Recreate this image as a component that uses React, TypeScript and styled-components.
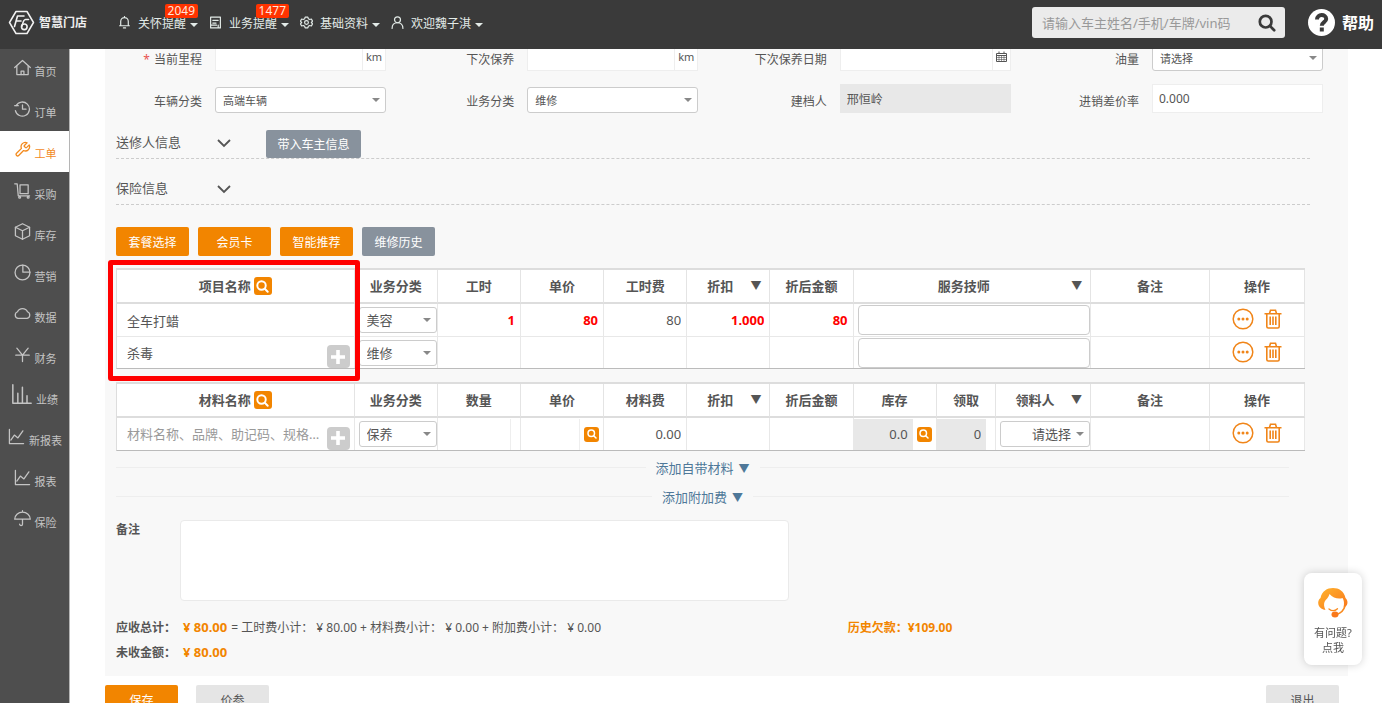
import React from "react";
import styled, { createGlobalStyle, css } from "styled-components";

const ORANGE = "#f28500";
const FONT = '"Noto Sans", "Noto Sans CJK SC", sans-serif';

const GlobalStyle = createGlobalStyle`
  *, *::before, *::after { box-sizing: border-box; }
  body { margin: 0; background: #fff; color: #555; font: 12px/18px ${FONT}; }
  button, input, select, textarea { font-family: inherit; color: inherit; margin: 0; }
  button { cursor: pointer; padding: 0; border: 0; background: none; }
  svg { display: block; flex: none; }
`;

/* ---------- shell ---------- */

const Shell = styled.div`
  height: 100vh;
  display: flex;
  flex-direction: column;
  overflow: hidden;
`;

const Header = styled.header`
  flex: none;
  height: 49px;
  display: flex;
  align-items: center;
  padding: 0 8px 4px;
  background: #3a3a3a;
  color: #e3ebe8;
`;

const Brand = styled.a`
  display: flex;
  align-items: center;
  gap: 4px;
  width: 110px;
  color: #eee;
  font-size: 12px;
  font-weight: 700;
  text-decoration: none;
`;

const Nav = styled.nav`
  display: flex;
  gap: 11px;
  flex: 1;
`;

const NavButton = styled.button`
  position: relative;
  display: flex;
  align-items: center;
  height: 28px;
  font-size: 12px;
  white-space: nowrap;
`;

const NavText = styled.span`
  margin: 0 4px 0 7px;
`;

const Caret = styled.i<{ $light?: boolean }>`
  flex: none;
  width: 0;
  height: 0;
  border: solid transparent;
  border-width: 4px 4px 0;
  border-top-color: ${(p) => (p.$light ? "#e3ebe8" : "#888")};
  margin-top: 4px;
`;

const Badge = styled.span`
  position: absolute;
  top: -5px;
  right: 0;
  height: 14px;
  padding: 0 3px;
  border-radius: 2px;
  background: #ff3300;
  color: #ffe6dd;
  font-size: 12px;
  line-height: 14px;
`;

const SearchBox = styled.form`
  display: flex;
  align-items: center;
  width: 253px;
  height: 31px;
  margin-right: 23px;
  padding: 0 9px 0 10px;
  border-radius: 3px;
  background: #ebebeb;
`;

const SearchInput = styled.input`
  flex: 1;
  min-width: 0;
  padding: 0;
  border: 0;
  outline: 0;
  background: none;
  font-size: 13px;
  &::placeholder { color: #999; }
`;

const Help = styled.a`
  display: flex;
  align-items: center;
  gap: 7px;
  color: #fff;
  font-size: 16px;
  font-weight: 700;
  text-decoration: none;
`;

const Body = styled.div`
  flex: 1;
  min-height: 0;
  display: flex;
`;

const Sidebar = styled.nav`
  flex: none;
  width: 70px;
  border-right: 1px solid #b5b5b5;
  background: #4e4e4e;
`;

const SideLink = styled.a<{ $active?: boolean }>`
  display: flex;
  justify-content: center;
  align-items: flex-end;
  gap: 4px;
  height: 41px;
  padding: 0 0 12px 1px;
  color: ${(p) => (p.$active ? "#f28a1e" : "#c4c4c4")};
  background: ${(p) => (p.$active ? "#fff" : "transparent")};
  font-size: 11px;
  line-height: 12px;
  text-decoration: none;
  white-space: nowrap;
  svg { margin-bottom: 2px; }
`;

const Main = styled.main`
  flex: 1;
  min-width: 0;
  overflow: hidden;
  padding: 0 34px 0 35px;
`;

/* The work order is scrolled: its first row starts under the header. */
const Panel = styled.section`
  margin-top: -7px;
  padding: 0 0 11px 11px;
  background: #f8f8f8;
`;

/* ---------- vehicle form ---------- */

const FormRow = styled.div`
  display: flex;
  justify-content: space-between;
  margin: 0 25px 13px 0;
`;

const Field = styled.div`
  display: flex;
  align-items: flex-end;
  width: 270px;
  height: 29px;
`;

const FieldLabel = styled.label`
  flex: 1;
  padding-right: 13px;
  line-height: 22px;
  text-align: right;
  white-space: nowrap;
`;

const Required = styled.span`
  margin-right: 4px;
  color: #e8534f;
`;

const Control = styled.div`
  display: flex;
  width: 171px;
  height: 29px;
  align-items: flex-end;
`;

const TextInput = styled.input`
  flex: 1;
  min-width: 0;
  height: 29px;
  padding: 0 6px;
  border: 1px solid #eee;
  background: #fff;
  font-size: 12px;
  &:disabled { background: #e8e8e8; border-color: #e8e8e8; color: #555; }
`;

const Addon = styled.span`
  display: flex;
  align-items: center;
  justify-content: center;
  min-width: 23px;
  height: 29px;
  border: 1px solid #eee;
  border-left: 0;
  background: #fff;
  font-size: 11px;
`;

const CalendarAddon = styled(Addon)`
  min-width: 18px;
`;

const SelectBox = styled.div<{ $table?: boolean }>`
  position: relative;
  flex: 1;
  height: 26px;
  ${(p) => p.$table && css`margin-left: 4px;`}
  ${Caret} {
    position: absolute;
    right: 6px;
    top: 11px;
    margin: 0;
    pointer-events: none;
  }
`;

const Select = styled.select<{ $size: number; $right?: boolean }>`
  appearance: none;
  display: block;
  width: 100%;
  height: 100%;
  padding: 0 18px 0 7px;
  border: 1px solid #ccc;
  border-radius: 3px;
  background: #fff;
  font-size: ${(p) => p.$size}px;
  text-align-last: ${(p) => (p.$right ? "right" : "left")};
`;

/* ---------- collapsible sections ---------- */

const Section = styled.div<{ $first?: boolean }>`
  display: flex;
  align-items: flex-end;
  height: ${(p) => (p.$first ? 33 : 46)}px;
  margin-right: 38px;
  border-bottom: 1px dashed #ccc;
`;

const SectionTitle = styled.h2`
  width: 101px;
  margin: 0 0 7px;
  font-size: 13px;
  font-weight: 400;
  line-height: 18px;
`;

const Toggle = styled.button`
  width: 14px;
  height: 18px;
  margin: 0 35px 6px 0;
`;

const Button = styled.button<{ $tone?: "orange" | "slate" | "plain"; $wide?: boolean }>`
  width: ${(p) => (p.$wide ? 95 : 73)}px;
  height: ${(p) => (p.$wide ? 28 : 29)}px;
  border-radius: 2px;
  color: ${(p) => (p.$tone === "plain" ? "#555" : "#fff")};
  background: ${(p) =>
    p.$tone === "slate" ? "#88929d" : p.$tone === "plain" ? "#e5e5e5" : ORANGE};
  font-size: 12px;
`;

const Toolbar = styled.div`
  display: flex;
  gap: 9px;
  margin: 22px 0 12px;
`;

const Content = styled.div`
  margin-right: 43px;
`;

/* ---------- tables ---------- */

const TableWrap = styled.div`
  position: relative;
  margin-bottom: 13px;
`;

const Table = styled.table`
  width: 100%;
  table-layout: fixed;
  border-collapse: separate;
  border-spacing: 0;
  border-top: 2px solid #ddd;
  border-bottom: 1px solid #bbb;
  border-left: 1px solid #ddd;
  background: #fff;
  font-size: 13px;
`;

const Th = styled.th`
  height: 34px;
  padding: 0;
  border-right: 1px solid #e4e4e4;
  border-bottom: 2px solid #ddd;
  font-weight: 700;
  white-space: nowrap;
`;

const ThInner = styled.div<{ $arrow?: boolean }>`
  display: flex;
  align-items: center;
  justify-content: center;
  gap: 3px;
  ${(p) => p.$arrow && css`padding: 0 8px 0 6px;`}
`;

const ThText = styled.span<{ $grow?: boolean }>`
  flex: ${(p) => (p.$grow ? 1 : "none")};
`;

const ThArrow = styled.span`
  font-size: 11px;
`;

const Td = styled.td`
  height: 32px;
  padding: 0;
  border-right: 1px solid #e8e8e8;
  tr + tr > & { border-top: 1px solid #e8e8e8; }
`;

const CellFlex = styled.div`
  display: flex;
  align-items: center;
  height: 31px;
`;

const CellInput = styled.input<{ $tone?: "red"; $right?: boolean; $off?: boolean; $edge?: boolean; $name?: boolean }>`
  flex: 1;
  min-width: 0;
  width: 100%;
  height: 31px;
  padding: ${(p) => (p.$name ? "0 0 0 10px" : "0 5px")};
  border: 0;
  border-right: ${(p) => (p.$edge ? "1px solid #eee" : "0")};
  outline: 0;
  background: ${(p) => (p.$off ? "#e8e8e8" : "transparent")};
  color: ${(p) => (p.$tone === "red" ? "#ff0000" : "#555")};
  font-size: 13px;
  font-weight: ${(p) => (p.$tone === "red" ? 700 : 400)};
  text-align: ${(p) => (p.$right ? "right" : "left")};
  text-overflow: ellipsis;
  &::placeholder { color: #999; }
`;

const Technician = styled.input`
  flex: 1;
  min-width: 0;
  height: 30px;
  margin-left: 4px;
  border: 1px solid #ccc;
  border-radius: 4px;
  background: #fff;
`;

const Spacer = styled.span`
  flex: none;
  width: 9px;
`;

const IconButton = styled.button<{ $size: number }>`
  flex: none;
  display: flex;
  align-items: center;
  justify-content: center;
  width: ${(p) => p.$size}px;
  height: ${(p) => p.$size}px;
  border-radius: 3px;
  background: ${ORANGE};
`;

const SmallSearch = styled(IconButton)`
  margin: 0 4px;
`;

const AddButton = styled(IconButton)`
  align-self: flex-end;
  margin: 0 4px;
  border-radius: 4px;
  background: #ccc;
`;

const Actions = styled.div`
  display: flex;
  align-items: center;
  justify-content: center;
  gap: 10px;
  height: 31px;
  padding-bottom: 2px;
`;

/* Highlight frame over the item-name column */
const Highlight = styled.div`
  position: absolute;
  top: -8px;
  bottom: -12px;
  left: -8px;
  width: calc(20% + 14px);
  border: 5px solid #ff0000;
  border-radius: 3px;
  pointer-events: none;
`;

const AddRows = styled.div`
  margin: 2px 16px 9px 0;
`;

const AddRow = styled.div`
  display: flex;
  align-items: center;
  gap: 10px;
  height: 29px;
  &::before, &::after { content: ""; flex: 1; border-top: 1px solid #eee; }
`;

const AddLink = styled.button`
  display: flex;
  align-items: center;
  gap: 5px;
  color: #4f7899;
  font-size: 13px;
`;

/* ---------- remarks and totals ---------- */

const Remark = styled.div`
  display: flex;
  label { width: 64px; font-weight: 700; line-height: 20px; }
`;

const RemarkArea = styled.textarea`
  width: 609px;
  height: 81px;
  border: 1px solid #eaeaea;
  border-radius: 4px;
  background: #fff;
  resize: none;
`;

const Totals = styled.div`
  display: grid;
  grid-template-columns: 8fr 5fr;
  margin-top: 14px;
  line-height: 25px;
  white-space: nowrap;
`;

const Strong = styled.b`
  display: inline-block;
  width: 67px;
`;

const Money = styled.b<{ $size?: number }>`
  color: ${ORANGE};
  font-size: ${(p) => p.$size ?? 12}px;
`;

const Breakdown = styled.span`
  margin-left: 4px;
`;

const Footer = styled.footer`
  display: flex;
  gap: 18px;
  margin: 9px 9px 0 0;
  button:last-child { margin-left: auto; }
`;

const Support = styled.button`
  position: fixed;
  right: 20px;
  bottom: 38px;
  display: flex;
  flex-direction: column;
  align-items: center;
  width: 58px;
  height: 92px;
  padding-top: 14px;
  border-radius: 8px;
  background: #fff;
  box-shadow: 0 0 8px rgba(0, 0, 0, 0.18);
  font-size: 11px;
  line-height: 15px;
`;

const SupportText = styled.span`
  margin-top: 7px;
`;

/* ---------- icons ---------- */

function Line({ size = 17, w = 1.8, children }: { size?: number; w?: number; children: React.ReactNode }) {
  return (
    <svg width={size} height={size} viewBox="0 0 24 24" fill="none" stroke="currentColor" strokeWidth={w} strokeLinecap="round" strokeLinejoin="round" aria-hidden="true">
      {children}
    </svg>
  );
}

const sideIcons: Record<string, React.ReactNode> = {
  home: <><path d="M1 12 12 2l11 10" /><path d="M4 10v12h16V10" /><path d="M10 22v-5h4v5" /></>,
  history: <><path d="M3 8a10 10 0 1 1-1 7" /><path d="M1 8h5" /><path d="M12 7v6h5" /></>,
  wrench: <path d="M14.700 6.300a1 1 0 0 0 0 1.400l1.600 1.600a1 1 0 0 0 1.400 0l3.770-3.770a6 6 0 0 1-7.940 7.940l-6.910 6.910a2.120 2.120 0 0 1-3-3l6.910-6.910a6 6 0 0 1 7.940-7.940l-3.760 3.760z" />,
  cart: <><path d="M1 2.500h3.500l1.500 17h16" /><path d="M8.500 4H20v12.500H8.500z" /><circle cx="8" cy="21.500" r="1.300" /><circle cx="20" cy="21.500" r="1.300" /></>,
  box: <><path d="M12 1 22 6v12l-10 5L2 18V6z" /><path d="m2 6 10 5 10-5M12 11v12" /></>,
  pie: <><circle cx="12" cy="12" r="10.500" /><path d="M12.500 1.500V11.500H22.500" /></>,
  cloud: <path d="M5.500 19a5 5 0 0 1-.5-9.500A7.500 7 0 0 1 19 9.500 5 5 0 0 1 18.500 19z" />,
  yen: <path d="m4 3 8 10 8-10M12 13v9M2.500 13h19" />,
  bars: <path d="M1 1v22h22M7 23V11M12.500 23V4M18 23v-9" />,
  line: <path d="M2 2v20h20M4 17l5-7 5 4 7-10" />,
  umbrella: <path d="M12 1v2M1 13A11 10 0 0 1 23 13zM12 13v7a2 2 0 0 1-4 0" />,
};

const BellIcon = () => (
  <Line size={13} w={2.2}><path d="M5 18V10a7 7 0 0 1 14 0v8zM3 18h18M12 1v2M10 22h4" /></Line>
);
const DocIcon = () => (
  <Line size={13} w={2.2}><path d="M3 2h18v20H3zM7 8h10M7 13h6M3 17h11M17 17v5" /></Line>
);
const GearIcon = () => (
  <Line size={13} w={2.2}><path d="m9.500 2-.8 3-2.700 1.500L3 5.600.8 9.500 3 12l-2.200 2.500L3 18.400l3-.9L8.700 19l.8 3h5l.8-3 2.700-1.500 3 .9 2.200-3.900L21 12l2.200-2.500L21 5.600l-3 .9L15.300 5l-.8-3z" /><circle cx="12" cy="12" r="3.500" /></Line>
);
const UserIcon = () => (
  <Line size={13} w={2.2}><circle cx="12" cy="7" r="5.500" /><path d="M2 23c0-7 4-10.500 10-10.500S22 16 22 23" /></Line>
);

const SearchGlyph = ({ size, color = "#fff", w = 3 }: { size: number; color?: string; w?: number }) => (
  <svg width={size} height={size} viewBox="0 0 20 20" fill="none" stroke={color} strokeWidth={w} strokeLinecap="round" aria-hidden="true">
    <circle cx="8.500" cy="8.500" r="6.500" /><path d="m13.500 13.500 4.500 4.500" />
  </svg>
);

const LogoIcon = () => (
  <svg width="27" height="25" viewBox="0 0 27 25" fill="none" aria-hidden="true">
    <path d="M8 1.500h11l6.500 11-6.500 11H8l-6.500-11z" stroke="#f2f2f2" strokeWidth="1.500" strokeLinejoin="round" />
    <g stroke="#f2f2f2" strokeWidth="1.600" strokeLinecap="round" strokeLinejoin="round">
      <path d="M6.500 16.500 9.500 6h6.500M8 11h5" />
      <path d="M20.500 9.500h-3c-2 0-2.500 2.500-3.500 6.500" />
      <ellipse cx="16.300" cy="16.800" rx="2.800" ry="2.800" />
    </g>
  </svg>
);

const HelpIcon = () => (
  <svg width="27" height="27" viewBox="0 0 27 27" aria-hidden="true">
    <circle cx="13.500" cy="13.500" r="13.500" fill="#fff" />
    <path d="M9 10.500c0-6 9.200-5.700 9.200-.6 0 3.200-4.400 3.200-4.400 6.800" fill="none" stroke="#3a3a3a" strokeWidth="4" />
    <rect x="11.800" y="18.500" width="4" height="4" fill="#3a3a3a" />
  </svg>
);

const CalendarIcon = () => (
  <svg width="11" height="11" viewBox="0 0 11 11" fill="none" stroke="#555" aria-hidden="true">
    <path d="M.5 2.500h10v8H.5zM.5 4.500h10M3 .5v2M8 .5v2" />
    <path d="M.5 6.500h10M.5 8.500h10M3 4.500v6M5.500 4.500v6M8 4.500v6" strokeWidth=".6" />
  </svg>
);

const ChevronIcon = () => (
  <svg width="14" height="18" viewBox="0 0 14 18" fill="none" stroke="#555" strokeWidth="1.800" aria-hidden="true">
    <path d="m1 6 6 6 6-6" />
  </svg>
);

const PlusIcon = () => (
  <svg width="14" height="14" viewBox="0 0 14 14" fill="#fff" aria-hidden="true">
    <path d="M5.200 0h3.600v5.200H14v3.600H8.800V14H5.200V8.800H0V5.200h5.200z" />
  </svg>
);

const MoreIcon = () => (
  <svg width="22" height="22" viewBox="0 0 22 22" fill="#f08519" aria-hidden="true">
    <circle cx="11" cy="11" r="9.800" fill="none" stroke="#f08519" strokeWidth="1.500" />
    <circle cx="6.800" cy="11" r="1.500" /><circle cx="11" cy="11" r="1.500" /><circle cx="15.200" cy="11" r="1.500" />
  </svg>
);

const TrashIcon = () => (
  <svg width="18" height="20" viewBox="0 0 18 20" fill="none" stroke="#f08519" strokeWidth="1.600" aria-hidden="true">
    <path d="M.5 4.800h17M5.500 4.500l1-3.200h5l1 3.200M2.800 5v12.500q0 1.500 1.500 1.500h9.400q1.500 0 1.500-1.500V5M6.200 7.500v8.500M9 7.500v8.500M11.800 7.500v8.500" />
  </svg>
);

const AgentIcon = () => (
  <svg width="32" height="31" viewBox="0 0 32 31" fill="none" aria-hidden="true">
    <defs>
      <linearGradient id="agent" x1="0" y1="0" x2="1" y2="1">
        <stop offset="0" stopColor="#ffb52e" /><stop offset="1" stopColor="#f9741a" />
      </linearGradient>
    </defs>
    <path d="M3.500 11C5 4 10 1 16 1s11 3 12.500 10c2.500 2 3 7-.5 9l-1.500.5c1-4 .5-7.500-1-9.500-4 1.500-9.500 0-13-4-1 4-3.500 5-5 8-.8 2-.5 5 1 8-3-.5-6-2-7-5-.8-3 0-5.500 2-7z" fill="url(#agent)" />
    <path d="M12 22c2.500 2 6 2 8.500-.3" stroke="#f98a1e" strokeWidth="1.300" strokeLinecap="round" />
    <path d="M28 19c-1 4-4 7-8.500 8.500" stroke="#f98a1e" strokeWidth="1.500" />
    <ellipse cx="18" cy="27.500" rx="3.500" ry="3" fill="#f9781a" />
  </svg>
);

/* ---------- data ---------- */

const navItems = [
  { text: "关怀提醒", icon: <BellIcon />, badge: "2049" },
  { text: "业务提醒", icon: <DocIcon />, badge: "1477" },
  { text: "基础资料", icon: <GearIcon /> },
  { text: "欢迎魏子淇", icon: <UserIcon /> },
];

const sideItems = [
  ["首页", "home"], ["订单", "history"], ["工单", "wrench"], ["采购", "cart"], ["库存", "box"], ["营销", "pie"],
  ["数据", "cloud"], ["财务", "yen"], ["业绩", "bars"], ["新报表", "line"], ["报表", "line"], ["保险", "umbrella"],
];

type HeadCell = { text: string; width: number; arrow?: boolean; search?: boolean };

const laborHead: HeadCell[] = [
  { text: "项目名称", width: 20, search: true }, { text: "业务分类", width: 7 }, { text: "工时", width: 7 },
  { text: "单价", width: 7 }, { text: "工时费", width: 7 }, { text: "折扣", width: 7, arrow: true },
  { text: "折后金额", width: 7 }, { text: "服务技师", width: 20, arrow: true }, { text: "备注", width: 10 }, { text: "操作", width: 8 },
];

const materialHead: HeadCell[] = [
  { text: "材料名称", width: 20, search: true }, { text: "业务分类", width: 7 }, { text: "数量", width: 7 },
  { text: "单价", width: 7 }, { text: "材料费", width: 7 }, { text: "折扣", width: 7, arrow: true },
  { text: "折后金额", width: 7 }, { text: "库存", width: 7 }, { text: "领取", width: 5 },
  { text: "领料人", width: 8, arrow: true }, { text: "备注", width: 10 }, { text: "操作", width: 8 },
];

const laborRows = [
  { name: "全车打蜡", kind: "美容", values: ["1", "80", "80", "1.000", "80"], add: false },
  { name: "杀毒", kind: "维修", values: ["", "", "", "", ""], add: true },
];

const Col = styled.col<{ $width: number }>`
  width: ${(p) => p.$width}%;
`;

function TableHead({ cells }: { cells: HeadCell[] }) {
  return (
    <>
      <colgroup>{cells.map((c) => <Col key={c.text} $width={c.width} />)}</colgroup>
      <thead>
        <tr>
          {cells.map((c) => (
            <Th key={c.text} scope="col">
              <ThInner $arrow={c.arrow}>
                <ThText $grow={c.arrow}>{c.text}</ThText>
                {c.arrow && <ThArrow>▼</ThArrow>}
                {c.search && (
                  <IconButton $size={18} type="button" aria-label={`搜索${c.text}`}><SearchGlyph size={13} /></IconButton>
                )}
              </ThInner>
            </Th>
          ))}
        </tr>
      </thead>
    </>
  );
}

function Dropdown({ id, value, label, size = 11, table, right }: { id?: string; value: string; label?: string; size?: number; table?: boolean; right?: boolean }) {
  return (
    <SelectBox $table={table}>
      <Select id={id} aria-label={label} $size={size} $right={right} defaultValue={value}>
        <option>{value}</option>
      </Select>
      <Caret />
    </SelectBox>
  );
}

function RowActions() {
  return (
    <Actions>
      <button type="button" aria-label="更多"><MoreIcon /></button>
      <button type="button" aria-label="删除"><TrashIcon /></button>
    </Actions>
  );
}

function FormField({ id, label, required, children }: { id: string; label: string; required?: boolean; children: React.ReactNode }) {
  return (
    <Field>
      <FieldLabel htmlFor={id}>{required && <Required>*</Required>}{label}</FieldLabel>
      <Control>{children}</Control>
    </Field>
  );
}

function AddLine({ text }: { text: string }) {
  return (
    <AddRow>
      <AddLink type="button">{text}<ThArrow>▼</ThArrow></AddLink>
    </AddRow>
  );
}

export default function App() {
  return (
    <Shell>
      <GlobalStyle />
      <Header>
        <Brand href="#"><LogoIcon />智慧门店</Brand>
        <Nav>
          {navItems.map((n) => (
            <NavButton key={n.text} type="button">
              {n.icon}<NavText>{n.text}</NavText><Caret $light />
              {n.badge && <Badge>{n.badge}</Badge>}
            </NavButton>
          ))}
        </Nav>
        <SearchBox role="search">
          <SearchInput aria-label="搜索" placeholder="请输入车主姓名/手机/车牌/vin码" />
          <button type="button" aria-label="搜索"><SearchGlyph size={18} color="#3a3a3a" /></button>
        </SearchBox>
        <Help href="#"><HelpIcon />帮助</Help>
      </Header>

      <Body>
        <Sidebar>
          {sideItems.map(([text, icon]) => (
            <SideLink key={text} href="#" $active={text === "工单"}>
              <Line size={icon === "bars" ? 20 : 17}>{sideIcons[icon]}</Line>{text}
            </SideLink>
          ))}
        </Sidebar>

        <Main>
          <Panel>
            <FormRow>
              <FormField id="mileage" label="当前里程" required><TextInput id="mileage" /><Addon>km</Addon></FormField>
              <FormField id="next" label="下次保养"><TextInput id="next" /><Addon>km</Addon></FormField>
              <FormField id="nextDate" label="下次保养日期"><TextInput id="nextDate" /><CalendarAddon><CalendarIcon /></CalendarAddon></FormField>
              <FormField id="fuel" label="油量"><Dropdown id="fuel" value="请选择" /></FormField>
            </FormRow>
            <FormRow>
              <FormField id="carKind" label="车辆分类"><Dropdown id="carKind" value="高端车辆" /></FormField>
              <FormField id="bizKind" label="业务分类"><Dropdown id="bizKind" value="维修" /></FormField>
              <FormField id="creator" label="建档人"><TextInput id="creator" defaultValue="邢恒岭" disabled /></FormField>
              <FormField id="rate" label="进销差价率"><TextInput id="rate" defaultValue="0.000" /></FormField>
            </FormRow>

            <Section $first>
              <SectionTitle>送修人信息</SectionTitle>
              <Toggle type="button" aria-label="展开送修人信息"><ChevronIcon /></Toggle>
              <Button type="button" $tone="slate" $wide>带入车主信息</Button>
            </Section>
            <Section>
              <SectionTitle>保险信息</SectionTitle>
              <Toggle type="button" aria-label="展开保险信息"><ChevronIcon /></Toggle>
            </Section>

            <Content>
              <Toolbar>
                <Button type="button">套餐选择</Button>
                <Button type="button">会员卡</Button>
                <Button type="button">智能推荐</Button>
                <Button type="button" $tone="slate">维修历史</Button>
              </Toolbar>

              <TableWrap>
                <Table>
                  <TableHead cells={laborHead} />
                  <tbody>
                    {laborRows.map((r) => (
                      <tr key={r.name}>
                        <Td>
                          <CellFlex>
                            <CellInput $name aria-label="项目名称" defaultValue={r.name} />
                            {r.add && <AddButton $size={23} type="button" aria-label="添加项目"><PlusIcon /></AddButton>}
                          </CellFlex>
                        </Td>
                        <Td><Dropdown table size={13} label="业务分类" value={r.kind} /></Td>
                        {r.values.map((v, i) => (
                          <Td key={i}>
                            <CellFlex>
                              <CellInput $right $tone={i === 2 ? undefined : "red"} aria-label={laborHead[i + 2].text} defaultValue={v} />
                            </CellFlex>
                          </Td>
                        ))}
                        <Td><CellFlex><Technician aria-label="服务技师" /></CellFlex></Td>
                        <Td><CellFlex><CellInput aria-label="备注" /></CellFlex></Td>
                        <Td><RowActions /></Td>
                      </tr>
                    ))}
                  </tbody>
                </Table>
                <Highlight />
              </TableWrap>

              <Table>
                <TableHead cells={materialHead} />
                <tbody>
                  <tr>
                    <Td>
                      <CellFlex>
                        <CellInput $name aria-label="材料名称" placeholder="材料名称、品牌、助记码、规格型号" />
                        <AddButton $size={23} type="button" aria-label="添加材料"><PlusIcon /></AddButton>
                      </CellFlex>
                    </Td>
                    <Td><Dropdown table size={13} label="业务分类" value="保养" /></Td>
                    <Td><CellFlex><CellInput $edge aria-label="数量" /><Spacer /></CellFlex></Td>
                    <Td>
                      <CellFlex>
                        <CellInput $edge aria-label="单价" />
                        <SmallSearch $size={15} type="button" aria-label="查询单价"><SearchGlyph size={10} /></SmallSearch>
                      </CellFlex>
                    </Td>
                    <Td><CellFlex><CellInput $right aria-label="材料费" defaultValue="0.00" /></CellFlex></Td>
                    <Td><CellFlex><CellInput aria-label="折扣" /></CellFlex></Td>
                    <Td><CellFlex><CellInput aria-label="折后金额" /></CellFlex></Td>
                    <Td>
                      <CellFlex>
                        <CellInput $right $off readOnly aria-label="库存" defaultValue="0.0" />
                        <SmallSearch $size={15} type="button" aria-label="查询库存"><SearchGlyph size={10} /></SmallSearch>
                      </CellFlex>
                    </Td>
                    <Td><CellFlex><CellInput $right $off readOnly aria-label="领取" defaultValue="0" /><Spacer /></CellFlex></Td>
                    <Td><Dropdown table right size={13} label="领料人" value="请选择" /></Td>
                    <Td><CellFlex><CellInput aria-label="备注" /></CellFlex></Td>
                    <Td><RowActions /></Td>
                  </tr>
                </tbody>
              </Table>

              <AddRows>
                <AddLine text="添加自带材料" />
                <AddLine text="添加附加费" />
              </AddRows>

              <Remark>
                <label htmlFor="remark">备注</label>
                <RemarkArea id="remark" />
              </Remark>

              <Totals>
                <div>
                  <Strong>应收总计：</Strong><Money $size={13}>¥ 80.00</Money>
                  <Breakdown>= 工时费小计： ¥ 80.00 + 材料费小计： ¥ 0.00 + 附加费小计： ¥ 0.00</Breakdown>
                </div>
                <Money>历史欠款：¥109.00</Money>
                <div><Strong>未收金额：</Strong><Money $size={13}>¥ 80.00</Money></div>
              </Totals>
            </Content>
          </Panel>

          <Footer>
            <Button type="button">保存</Button>
            <Button type="button" $tone="plain">价参</Button>
            <Button type="button" $tone="plain">退出</Button>
          </Footer>
        </Main>
      </Body>

      <Support type="button">
        <AgentIcon />
        <SupportText>有问题?<br />点我</SupportText>
      </Support>
    </Shell>
  );
}
